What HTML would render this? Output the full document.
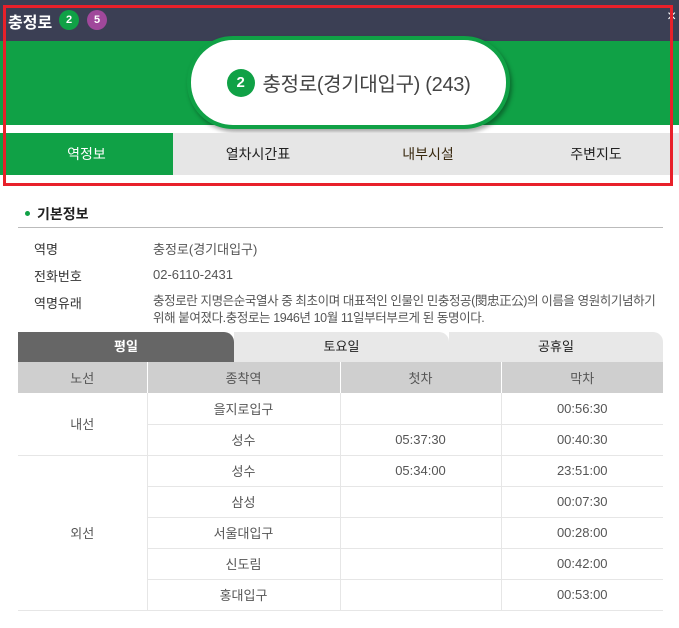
<!DOCTYPE html>
<html><head><meta charset="utf-8"><style>
*{margin:0;padding:0;box-sizing:border-box}
body{width:679px;height:628px;background:#fff;font-family:"Liberation Sans","Noto Sans CJK KR",sans-serif;position:relative;overflow:hidden;color:#333}
.abs{position:absolute}
.top{left:0;top:0;width:679px;height:41px;background:#3b3f54}
.green{left:0;top:41px;width:679px;height:84px;background:#10a146}
.badge{width:20px;height:20px;border-radius:50%;color:#fff;font-size:11px;text-align:center;line-height:20px;font-weight:bold}
.pill{left:187px;top:36px;width:323px;height:93px;background:#fff;border:4px solid #10a146;border-radius:46px;box-shadow:2px 3px 4px rgba(0,0,0,.35);display:flex;align-items:center;justify-content:center;font-size:20px;color:#444;letter-spacing:-0.3px}
.tabs{left:0;top:133px;width:679px;height:42px;background:#e6e6e6;font-size:14px;color:#222}
.tabs div{position:absolute;top:0;height:42px;line-height:42px;text-align:center}
.red{left:3px;top:5px;width:670px;height:181px;border:3px solid #e8202a}
.lbl{font-size:13px;color:#333}
.val{font-size:13px;color:#555}
table{position:absolute;left:18px;top:362px;width:645px;border-collapse:collapse;font-size:13px;color:#555}
td,th{height:31px;text-align:center;border-bottom:1px solid #e6e6e6;border-left:1px solid #e6e6e6;font-weight:normal}
th{background:#cfcfcf;color:#555;border-left:1px solid #fff;border-bottom:none}
.f{border-left:none}
.dt{top:332px;height:30px;font-size:13px;text-align:center;line-height:30px;border-radius:0 10px 0 0}
</style></head><body>
<div class="abs top"></div>
<div class="abs" style="left:8px;top:9px;font-size:16px;font-weight:bold;color:#fff">충정로</div>
<div class="abs badge" style="left:59px;top:10px;background:#10a146">2</div>
<div class="abs badge" style="left:87px;top:10px;background:#a0489b">5</div>
<div class="abs" style="left:667px;top:8px;color:#fff;font-size:16px">×</div>
<div class="abs green"></div>
<div class="abs pill"><span class="badge" style="display:inline-block;width:28px;height:28px;line-height:28px;font-size:15px;background:#10a146;margin-right:8px">2</span>충정로(경기대입구) (243)</div>
<div class="abs tabs">
<div style="left:0;width:173px;background:#10a146;color:#fff">역정보</div>
<div style="left:173px;width:170px">열차시간표</div>
<div style="left:343px;width:170px;color:#3a2a10">내부시설</div>
<div style="left:513px;width:166px">주변지도</div>
</div>
<div class="abs red"></div>
<div class="abs" style="left:25px;top:211px;width:5px;height:5px;border-radius:50%;background:#10a146"></div>
<div class="abs" style="left:37px;top:204px;font-size:14px;font-weight:bold;color:#222">기본정보</div>
<div class="abs" style="left:18px;top:227px;width:645px;height:1px;background:#bbb"></div>
<div class="abs lbl" style="left:34px;top:239px">역명</div>
<div class="abs val" style="left:153px;top:239px">충정로(경기대입구)</div>
<div class="abs lbl" style="left:34px;top:266px">전화번호</div>
<div class="abs val" style="left:153px;top:267px">02-6110-2431</div>
<div class="abs lbl" style="left:34px;top:293px">역명유래</div>
<div class="abs val" style="left:153px;top:293px;width:515px;line-height:17px;font-size:12.5px;letter-spacing:-0.4px">충정로란 지명은순국열사 중 최초이며 대표적인 인물인 민충정공(閔忠正公)의 이름을 영원히기념하기 위해 붙여졌다.충정로는 1946년 10월 11일부터부르게 된 동명이다.</div>
<div class="abs dt" style="left:18px;width:216px;background:#666;color:#fff;font-weight:bold">평일</div>
<div class="abs dt" style="left:234px;width:215px;background:#e8e8e8;color:#222">토요일</div>
<div class="abs dt" style="left:449px;width:214px;background:#e8e8e8;color:#222">공휴일</div>
<table>
<tr><th class="f" style="width:129px">노선</th><th style="width:193px">종착역</th><th style="width:161px">첫차</th><th>막차</th></tr>
<tr><td class="f" rowspan="2">내선</td><td>을지로입구</td><td></td><td>00:56:30</td></tr>
<tr><td>성수</td><td>05:37:30</td><td>00:40:30</td></tr>
<tr><td class="f" rowspan="5">외선</td><td>성수</td><td>05:34:00</td><td>23:51:00</td></tr>
<tr><td>삼성</td><td></td><td>00:07:30</td></tr>
<tr><td>서울대입구</td><td></td><td>00:28:00</td></tr>
<tr><td>신도림</td><td></td><td>00:42:00</td></tr>
<tr><td>홍대입구</td><td></td><td>00:53:00</td></tr>
</table>
</body></html>
